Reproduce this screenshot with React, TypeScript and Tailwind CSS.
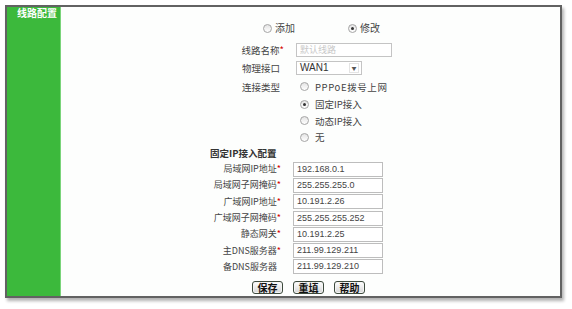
import { FC } from "react";

const cjk = { fontFamily: '"Noto Sans CJK SC", "Liberation Sans", sans-serif' };
const latin = { fontFamily: '"Liberation Sans", sans-serif' };

const Radio: FC<{ checked?: boolean }> = ({ checked }) => (
  <span className="flex h-[9px] w-[9px] items-center justify-center rounded-full border border-[#a5a5a5] bg-gradient-to-b from-[#e4e4e4] to-white">
    {checked && <span className="h-[3px] w-[3px] rounded-full bg-[#333]" />}
  </span>
);

const Star = () => <span className="text-[#d40000]">*</span>;

const topRows = [
  { label: "PPPoE拨号上网", checked: false, h: "h-[19px]" },
  { label: "固定IP接入", checked: true, h: "h-[16px]" },
  { label: "动态IP接入", checked: false, h: "h-[17px]" },
  { label: "无", checked: false, h: "h-[16px]" },
];

const ipRows = [
  { label: "局域网IP地址", value: "192.168.0.1", req: true },
  { label: "局域网子网掩码", value: "255.255.255.0", req: true },
  { label: "广域网IP地址", value: "10.191.2.26", req: true },
  { label: "广域网子网掩码", value: "255.255.255.252", req: true },
  { label: "静态网关", value: "10.191.2.25", req: true },
  { label: "主DNS服务器", value: "211.99.129.211", req: true },
  { label: "备DNS服务器", value: "211.99.129.210", req: false },
];

const Btn: FC<{ text: string }> = ({ text }) => (
  <button
    type="button"
    className="flex h-[13px] w-[31px] items-center justify-center rounded-[3px] border border-[#3d4a3d] bg-gradient-to-b from-white to-[#d6d6d6] text-[10px] font-bold leading-none text-[#111] shadow-[inset_0_0_0_1px_#f4f4f4]"
  >
    {text}
  </button>
);

export default function App() {
  return (
    <div className="h-[309px] w-[572px] bg-white pl-[5px] pt-[5px]" style={cjk}>
      <div className="flex h-[293px] w-[557px] border-2 border-[#626262] bg-[#fdfefd] shadow-[2px_3px_3px_rgba(0,0,0,0.3)]">
        {/* sidebar */}
        <div className="w-[54px] border-r border-[#7ad47a] bg-[#3cb93c]">
          <div className="-mt-[1px] pr-[3px] text-right text-[10px] font-bold leading-[13px] text-white">线路配置</div>
        </div>

        {/* content */}
        <div className="flex-1 text-[9.5px] leading-[14px] text-[#444]">
          <div className="flex h-[34px] items-end pb-[6px] text-[10px]">
            <div className="ml-[202px] flex items-center gap-[3px]">
              <Radio />
              <span>添加</span>
            </div>
            <div className="ml-[53px] flex items-center gap-[3px]">
              <Radio checked />
              <span>修改</span>
            </div>
          </div>

          <div className="flex h-[18px] items-center">
            <div className="w-[223px] text-right">
              线路名称<Star />
            </div>
            <div className="ml-[12px] h-[14px] w-[96px] border border-[#c4c4c4] bg-white pl-[3px] text-[9px] leading-[12px] text-[#c8c8c8]">
              默认线路
            </div>
          </div>

          <div className="flex h-[18px] items-center">
            <div className="w-[219px] text-right">物理接口</div>
            <div className="ml-[16px] flex h-[14px] w-[66px] items-center justify-between border border-[#c4c4c4] bg-white pl-[3px] pr-[2px]">
              <span className="text-[10px] leading-none text-[#333]" style={latin}>
                WAN1
              </span>
              <span className="flex h-[10px] w-[10px] items-center justify-center border border-[#e4e4e4] text-[5px] text-[#555]">
                ▼
              </span>
            </div>
          </div>

          {topRows.map((r, i) => (
            <div key={r.label} className={`flex ${r.h} items-center`}>
              <div className="w-[219px] text-right">{i === 0 ? "连接类型" : ""}</div>
              <div className="ml-[20px] flex items-center gap-[6px]">
                <Radio checked={r.checked} />
                <span style={{ letterSpacing: i === 0 ? "0.6px" : undefined }}>{r.label}</span>
              </div>
            </div>
          ))}

          <div className="flex h-[15px] items-center pl-[149px] font-bold text-[#333]">固定IP接入配置</div>

          <div className="mt-[1px] text-[9px]">
            {ipRows.map((r) => (
              <div key={r.label} className="flex h-[16.3px] items-center">
                <div className="w-[220px] text-right">
                  {r.label}
                  {r.req ? <Star /> : <span className="inline-block w-[4px]" />}
                </div>
                <div
                  className="ml-[12px] h-[15px] w-[90px] border border-[#bdbdbd] bg-white pl-[3px] text-[9px] leading-[13px] text-[#444]"
                  style={latin}
                >
                  {r.value}
                </div>
              </div>
            ))}
          </div>

          <div className="mt-[6px] flex items-center gap-[10px] pl-[191px]">
            <Btn text="保存" />
            <Btn text="重填" />
            <Btn text="帮助" />
          </div>
        </div>
      </div>
    </div>
  );
}
